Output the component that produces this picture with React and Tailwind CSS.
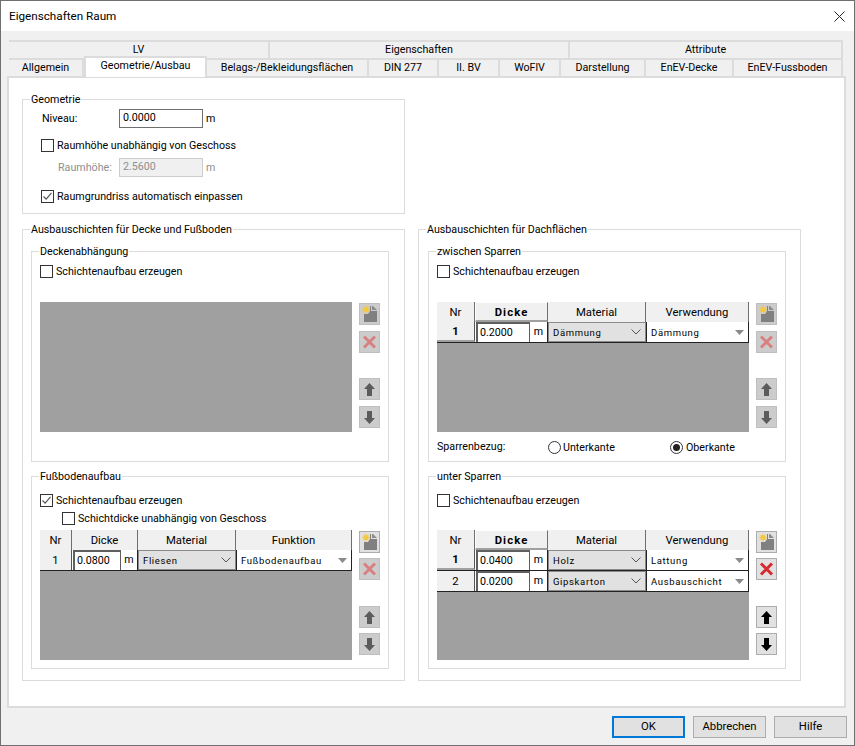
import React from "react";

function Check({ checked }) {
  return (
    <span className="w-[13px] h-[13px] shrink-0 border border-[#333333] bg-white flex items-center justify-center">
      {checked && (
        <svg width="11" height="11" viewBox="0 0 11 11">
          <path d="M1.5 5.5 L4.2 8.2 L9.5 1.8" fill="none" stroke="#555555" strokeWidth="1.2" />
        </svg>
      )}
    </span>
  );
}

function CheckRow({ checked, label, className }) {
  return (
    <div className={"flex items-center gap-[3px] h-[13px] " + className}>
      <Check checked={checked} />
      <span className="pt-[1px]">{label}</span>
    </div>
  );
}

function Radio({ on }) {
  return (
    <span className="w-[13px] h-[13px] shrink-0 rounded-full border border-[#333333] bg-white flex items-center justify-center">
      {on && <span className="w-[7px] h-[7px] rounded-full bg-[#222222]" />}
    </span>
  );
}

function Group({ title, className, children }) {
  return (
    <div className={"relative border border-[#dcdcdc] " + className}>
      <span className="absolute -top-[7px] left-[7px] bg-white px-[1px] leading-[13px]">{title}</span>
      {children}
    </div>
  );
}

function ToolButton({ disabled, className, children }) {
  return (
    <div
      className={
        "w-[21px] h-[22px] flex items-center justify-center border " +
        (disabled ? "bg-[#cccccc] border-[#bfbfbf] " : "bg-[#e1e1e1] border-[#adadad] ") +
        className
      }
    >
      {children}
    </div>
  );
}

function NewIcon() {
  return (
    <svg width="17" height="18" viewBox="0 0 17 18">
      <path d="M3 9 L7 9 L9 6 L9 1 L10 1 L10 6 L16 6 L16 17 L3 17 Z" fill="#808080" />
      <path d="M11 1 L12 1 L16 5 L11 5 Z" fill="#8c8c8c" />
      <circle cx="5" cy="4.5" r="2.6" fill="#f5c842" />
      <path d="M5 0.5 V8.5 M1 4.5 H9 M2.2 1.7 L7.8 7.3 M7.8 1.7 L2.2 7.3" stroke="#f5c842" strokeWidth="1" />
    </svg>
  );
}

function XIcon({ disabled }) {
  return (
    <svg width="15" height="14" viewBox="0 0 15 14">
      <path d="M2 1.5 L13 12.5 M13 1.5 L2 12.5" stroke={disabled ? "#d98080" : "#d62a2f"} strokeWidth="3" />
    </svg>
  );
}

function UpIcon({ disabled }) {
  return (
    <svg width="11" height="13" viewBox="0 0 11 13">
      <path d="M5.5 0 L11 6 L8 6 L8 13 L3 13 L3 6 L0 6 Z" fill={disabled ? "#5c5c5c" : "#000000"} />
    </svg>
  );
}

function DownIcon({ disabled }) {
  return (
    <svg width="11" height="13" viewBox="0 0 11 13">
      <path d="M5.5 13 L11 7 L8 7 L8 0 L3 0 L3 7 L0 7 Z" fill={disabled ? "#5c5c5c" : "#000000"} />
    </svg>
  );
}

function Tools({ disabled, newDisabled, tight }) {
  return (
    <div className="ml-[7px] mt-[1px] flex flex-col">
      <ToolButton disabled={newDisabled} className="">
        <NewIcon />
      </ToolButton>
      <ToolButton disabled={disabled} className={tight ? "mt-[5px]" : "mt-[6px]"}>
        <XIcon disabled={disabled} />
      </ToolButton>
      <ToolButton disabled={disabled} className={tight ? "mt-[26px]" : "mt-[25px]"}>
        <UpIcon disabled={disabled} />
      </ToolButton>
      <ToolButton disabled={disabled} className={tight ? "mt-[5px]" : "mt-[6px]"}>
        <DownIcon disabled={disabled} />
      </ToolButton>
    </div>
  );
}

function HeadCell({ width, bold, children }) {
  return (
    <div
      className={
        "h-[20px] flex items-center justify-center text-[11.3px] bg-[#f0f0f0] border-r border-[#6f6f6f] " +
        (bold
          ? "pt-[2px] font-bold tracking-[1.1px] border-t border-l border-t-white border-l-white border-b-2 border-b-[#a0a0a0] "
          : "pt-[1px] ") +
        width
      }
    >
      {children}
    </div>
  );
}

function Row({ cols, nr, value, material, use, bold }) {
  return (
    <div className="flex h-[21px] border-b border-[#222222]">
      <div
        className={
          "flex items-center justify-center pt-[2px] text-[11.3px] bg-[#f0f0f0] border-r border-[#555555] " +
          (bold ? "font-bold border-b-2 border-b-[#a0a0a0] " : "") +
          cols.nr
        }
      >
        {nr}
      </div>
      <div className={"flex bg-white border-r border-[#222222] pl-[1px] " + cols.dicke}>
        <div className={"h-full border-2 border-[#5f5f5f] border-r border-b-0 pl-[2px] flex items-center " + cols.input}>
          {value}
        </div>
        <div className="flex-1 flex items-center justify-center pt-[1px]">m</div>
      </div>
      <div className={"flex items-center justify-between bg-[#e1e1e1] border border-[#8a8a8a] pl-[4px] pr-[4px] text-[9.5px] tracking-[0.65px] " + cols.mat}>
        <span className="pt-[2px]">{material}</span>
        <svg width="10" height="6" viewBox="0 0 10 6">
          <path d="M0.5 0.5 L5 5 L9.5 0.5" fill="none" stroke="#555555" strokeWidth="1" />
        </svg>
      </div>
      <div className={"flex items-center justify-between bg-white border-l border-r border-[#222222] pl-[4px] pr-[4px] text-[9.5px] tracking-[0.65px] " + cols.use}>
        <span className="pt-[2px]">{use}</span>
        <svg width="9" height="5" viewBox="0 0 9 5">
          <path d="M0 0 L9 0 L4.5 5 Z" fill="#8a8a8a" />
        </svg>
      </div>
    </div>
  );
}

function Table({ cols, head4, active, rows }) {
  return (
    <div className="w-[312px] h-[130px] bg-[#a0a0a0] flex flex-col">
      <div className="flex">
        <HeadCell width={cols.nr}>Nr</HeadCell>
        <HeadCell width={cols.dicke} bold={active}>Dicke</HeadCell>
        <HeadCell width={cols.mat}>Material</HeadCell>
        <HeadCell width={cols.use}>{head4}</HeadCell>
      </div>
      {rows.map((r) => (
        <Row key={r.nr} cols={cols} {...r} />
      ))}
    </div>
  );
}

const rightCols = { nr: "w-[38px]", dicke: "w-[73px]", input: "w-[54px]", mat: "w-[98px]", use: "w-[103px]" };
const leftCols = { nr: "w-[32px]", dicke: "w-[66px]", input: "w-[48px]", mat: "w-[98px]", use: "w-[116px]" };

const topTabs = [
  { label: "LV", w: "w-[261px]" },
  { label: "Eigenschaften", w: "w-[300px]" },
  { label: "Attribute", w: "w-[273px]" },
];

function Tab({ w, children }) {
  return (
    <div className={"h-[18px] flex items-center justify-center bg-[#f0f0f0] border-t-2 border-r-2 border-[#dcdcdc] " + w}>
      {children}
    </div>
  );
}

function LowerTab({ w, children }) {
  return (
    <div className={"h-[18px] flex items-center justify-center pt-[1px] bg-[#f0f0f0] border-t-2 border-r-2 border-[#dcdcdc] " + w}>
      {children}
    </div>
  );
}

function FooterButton({ primary, children }) {
  return (
    <div
      className={
        "w-[73px] h-[22px] flex items-center justify-center text-[11.3px] bg-[#e1e1e1] " +
        (primary ? "border-2 border-[#0078d7]" : "border border-[#adadad]")
      }
    >
      {children}
    </div>
  );
}

export default function App() {
  return (
    <div className="w-[855px] h-[746px] flex flex-col border border-[#6f6f6f] bg-[#f0f0f0] text-[10.7px] leading-none text-black font-['Roboto',sans-serif] overflow-hidden">
      <div className="h-[30px] shrink-0 bg-white flex items-center justify-between pl-[8px] pr-[9px] text-[11.7px]">
        <span className="pt-[1px]">Eigenschaften Raum</span>
        <svg width="11" height="11" viewBox="0 0 11 11">
          <path d="M0.5 0.5 L10.5 10.5 M10.5 0.5 L0.5 10.5" stroke="#222222" strokeWidth="1" />
        </svg>
      </div>

      <div className="pt-[9px] pl-[8px] flex">
        {topTabs.map((t) => (
          <Tab key={t.label} w={t.w}>{t.label}</Tab>
        ))}
      </div>
      <div className="pl-[8px] flex items-start">
        <LowerTab w="w-[75px]">Allgemein</LowerTab>
        <div className="relative z-10 w-[123px] h-[21px] -mt-[2px] -mb-[1px] flex items-center justify-center bg-white border-t-2 border-l-2 border-r-2 border-[#dcdcdc] pb-[2px]">
          Geometrie/Ausbau
        </div>
        <LowerTab w="w-[162px]">Belags-/Bekleidungsflächen</LowerTab>
        <LowerTab w="w-[70px]">DIN 277</LowerTab>
        <LowerTab w="w-[61px]">II. BV</LowerTab>
        <LowerTab w="w-[61px]">WoFlV</LowerTab>
        <LowerTab w="w-[85px]">Darstellung</LowerTab>
        <LowerTab w="w-[88px]">EnEV-Decke</LowerTab>
        <LowerTab w="w-[109px]">EnEV-Fussboden</LowerTab>
      </div>

      <div className="ml-[6px] w-[839px] h-[632px] shrink-0 bg-white border-2 border-[#dcdcdc] pl-[13px] pt-[21px]">
        <Group title="Geometrie" className="w-[383px] h-[115px] pl-[18px] pt-[9px]">
          <div className="flex items-center h-[19px]">
            <span className="w-[78px] pl-[1px] pt-[2px]">Niveau:</span>
            <div className="w-[84px] h-[19px] border border-[#6f6f6f] flex items-center pl-[3px]">0.0000</div>
            <span className="ml-[3px] pt-[1px]">m</span>
          </div>
          <CheckRow label="Raumhöhe unabhängig von Geschoss" className="mt-[11px]" />
          <div className="flex items-center h-[19px] mt-[6px] text-[#8f8f8f]">
            <span className="w-[78px] pl-[17px] pt-[2px]">Raumhöhe:</span>
            <div className="w-[84px] h-[19px] border border-[#cccccc] bg-[#f0f0f0] flex items-center pl-[3px]">2.5600</div>
            <span className="ml-[3px] pt-[1px]">m</span>
          </div>
          <CheckRow checked label="Raumgrundriss automatisch einpassen" className="mt-[13px]" />
        </Group>

        <div className="flex gap-[13px] mt-[15px]">
          <Group title="Ausbauschichten für Decke und Fußboden" className="w-[383px] h-[452px] pl-[8px] pt-[21px]">
            <Group title="Deckenabhängung" className="w-[358px] h-[211px] pl-[8px] pt-[13px]">
              <CheckRow label="Schichtenaufbau erzeugen" />
              <div className="flex mt-[24px]">
                <div className="w-[312px] h-[130px] bg-[#a0a0a0]" />
                <Tools disabled newDisabled />
              </div>
            </Group>
            <Group title="Fußbodenaufbau" className="w-[358px] h-[193px] mt-[14px] pl-[8px] pt-[17px]">
              <CheckRow checked label="Schichtenaufbau erzeugen" />
              <CheckRow label="Schichtdicke unabhängig von Geschoss" className="ml-[22px] mt-[5px]" />
              <div className="flex mt-[5px]">
                <Table
                  cols={leftCols}
                  head4="Funktion"
                  rows={[{ nr: "1", value: "0.0800", material: "Fliesen", use: "Fußbodenaufbau" }]}
                />
                <Tools disabled tight />
              </div>
            </Group>
          </Group>

          <Group title="Ausbauschichten für Dachflächen" className="w-[383px] h-[452px] pl-[9px] pt-[21px]">
            <Group title="zwischen Sparren" className="w-[358px] h-[211px] pl-[8px] pt-[13px]">
              <CheckRow label="Schichtenaufbau erzeugen" />
              <div className="flex mt-[24px]">
                <Table
                  cols={rightCols}
                  head4="Verwendung"
                  active
                  rows={[{ nr: "1", value: "0.2000", material: "Dämmung", use: "Dämmung", bold: true }]}
                />
                <Tools disabled newDisabled />
              </div>
              <div className="flex items-center h-[15px] mt-[8px]">
                <span className="w-[111px]">Sparrenbezug:</span>
                <Radio />
                <span className="ml-[2px] w-[107px] pt-[1px]">Unterkante</span>
                <Radio on />
                <span className="ml-[3px] pt-[1px]">Oberkante</span>
              </div>
            </Group>
            <Group title="unter Sparren" className="w-[358px] h-[193px] mt-[14px] pl-[8px] pt-[17px]">
              <CheckRow label="Schichtenaufbau erzeugen" />
              <div className="flex mt-[23px]">
                <Table
                  cols={rightCols}
                  head4="Verwendung"
                  active
                  rows={[
                    { nr: "1", value: "0.0400", material: "Holz", use: "Lattung", bold: true },
                    { nr: "2", value: "0.0200", material: "Gipskarton", use: "Ausbauschicht" },
                  ]}
                />
                <Tools tight />
              </div>
            </Group>
          </Group>
        </div>
      </div>

      <div className="flex justify-end gap-[8px] pr-[7px] pt-[8px]">
        <FooterButton primary>OK</FooterButton>
        <FooterButton>Abbrechen</FooterButton>
        <FooterButton>Hilfe</FooterButton>
      </div>
    </div>
  );
}
